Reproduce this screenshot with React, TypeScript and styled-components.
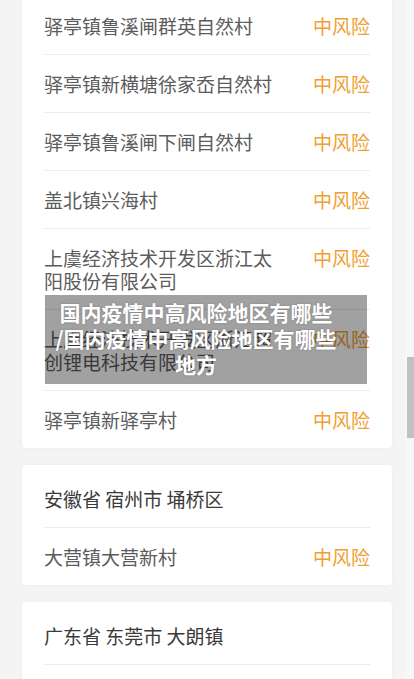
import styled, { createGlobalStyle } from "styled-components";

const GlobalStyle = createGlobalStyle`
  html, body {
    margin: 0;
    padding: 0;
    height: 679px;
    overflow: hidden;
    background: #f4f4f4;
  }
  body {
    font-family: "Noto Sans CJK SC", "Noto Sans", sans-serif;
  }
`;

type Area = { name: string; level?: string };
type Group = { region?: string; areas: Area[] };

const groups: Group[] = [
  {
    areas: [
      { name: "驿亭镇鲁溪闸群英自然村", level: "中风险" },
      { name: "驿亭镇新横塘徐家岙自然村", level: "中风险" },
      { name: "驿亭镇鲁溪闸下闸自然村", level: "中风险" },
      { name: "盖北镇兴海村", level: "中风险" },
      { name: "上虞经济技术开发区浙江太阳股份有限公司", level: "中风险" },
      { name: "上虞经济技术开发区浙江超创锂电科技有限公司", level: "中风险" },
      { name: "驿亭镇新驿亭村", level: "中风险" },
    ],
  },
  {
    region: "安徽省 宿州市 埇桥区",
    areas: [{ name: "大营镇大营新村", level: "中风险" }],
  },
  {
    region: "广东省 东莞市 大朗镇",
    areas: [{ name: "大朗镇水口村", level: "中风险" }],
  },
];

function App() {
  return (
    <>
      <GlobalStyle />
      <Page>
        {groups.map((g, i) => (
          <Card key={i}>
            {g.region && <Region>{g.region}</Region>}
            {g.areas.map((a) => (
              <Row key={a.name}>
                <Name>{a.name}</Name>
                {a.level && <Level>{a.level}</Level>}
              </Row>
            ))}
          </Card>
        ))}
        <Banner>
          <BannerText>
            国内疫情中高风险地区有哪些
            <br />
            /国内疫情中高风险地区有哪些
            <br />
            地方
          </BannerText>
        </Banner>
      </Page>
      <Track>
        <Thumb />
      </Track>
    </>
  );
}

export default App;

const Page = styled.div`
  position: relative;
  margin-top: -3px;
  padding: 0 22px;
  display: flex;
  flex-direction: column;
  gap: 17px;
`;

const Card = styled.section`
  background: #fff;
  border-radius: 4px;
  box-shadow: 0 0 4px rgba(0, 0, 0, 0.03);
`;

const Region = styled.div`
  margin: 0 22px;
  padding: 22px 0 17px;
  border-bottom: 1px solid #ececec;
  font-size: 19px;
  line-height: 23px;
  color: #3a3a3a;
`;

const Row = styled.div`
  margin: 0 22px;
  padding: 17px 0;
  display: flex;
  align-items: flex-start;
  justify-content: space-between;
  gap: 30px;
  border-bottom: 1px solid #ececec;

  &:last-child {
    border-bottom: none;
  }
`;

const Name = styled.div`
  flex: 1;
  font-size: 19px;
  line-height: 23px;
  color: #5c5c5c;
`;

const Level = styled.div`
  flex-shrink: 0;
  font-size: 19px;
  line-height: 23px;
  color: #f0a030;
`;

const Banner = styled.div`
  position: absolute;
  left: 45px;
  top: 298px;
  width: 322px;
  height: 89px;
  box-sizing: border-box;
  padding: 4px 20px 0 0;
  background: rgba(0, 0, 0, 0.37);
`;

const BannerText = styled.div`
  text-align: center;
  font-size: 21px;
  font-weight: 700;
  line-height: 26px;
  color: #fff;
  text-shadow: 0 0 2px rgba(0, 0, 0, 0.25);
`;

const Track = styled.div`
  position: fixed;
  top: 0;
  right: 0;
  width: 9px;
  height: 100%;
  background: #f7f7f7;
`;

const Thumb = styled.div`
  position: absolute;
  top: 357px;
  right: 0;
  width: 7px;
  height: 81px;
  background: #c1c1c1;
`;
